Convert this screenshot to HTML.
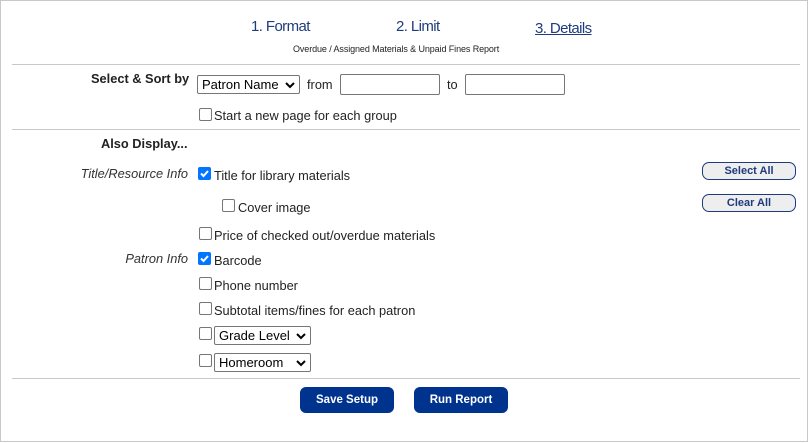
<!DOCTYPE html>
<html><head><style>
body{margin:0;width:810px;height:443px;position:relative;font-family:"Liberation Sans",Arial,sans-serif;font-size:12.8px;color:#222;background:#fff;overflow:hidden}
.frame{position:absolute;left:0;top:0;width:806px;height:440px;border:1px solid #c8c8c8}
.a{position:absolute;white-space:nowrap}
.hr{position:absolute;left:12px;width:788px;height:1px;background:#c8c8c8}
.step{font-size:15px;color:#1f3b7f;letter-spacing:-0.6px}
.cb{position:absolute;width:11px;height:11px;border:1px solid #767676;border-radius:2px;background:#fff}
.cbc{position:absolute;width:13px;height:13px;border-radius:2px;background:#0075ff}
.sel{position:absolute;height:19px;border:1px solid #767676;border-radius:2px;background:#fff;font-size:13px;box-sizing:border-box;padding:1px 4px;color:#000}
.inp{position:absolute;height:21px;border:1px solid #767676;border-radius:2px;box-sizing:border-box;background:#fff}
.chev{position:absolute;right:4px;top:5px}
.lab{position:absolute;font-style:italic;text-align:right;right:622px;color:#333}
.btn{position:absolute;background:#00338d;color:#fff;font-weight:bold;font-size:11.5px;border-radius:6px;text-align:center;line-height:26px;height:26px}
.sb{position:absolute;width:92px;height:16px;border:1px solid #1f3b7f;border-radius:7px;background:#eeeeee;color:#1f3b7f;font-weight:bold;font-size:11px;text-align:center;line-height:16px}
</style></head><body>
<div class="frame"></div>
<div class="a step" style="left:251px;top:18px">1. Format</div>
<div class="a step" style="left:396px;top:18px">2. Limit</div>
<div class="a step" style="left:535px;top:20px;text-decoration:underline">3. Details</div>
<div class="a" style="left:293px;top:44px;font-size:9px;color:#222;letter-spacing:-0.1px">Overdue / Assigned Materials &amp; Unpaid Fines Report</div>
<div class="hr" style="top:64px"></div>
<div class="a" style="left:91px;top:71px;font-weight:bold">Select &amp; Sort by</div>
<div class="sel" style="left:197px;top:75px;width:103px">Patron Name<svg class="chev" width="10" height="8" viewBox="0 0 10 8"><path d="M1 2l4 4 4-4" stroke="#000" stroke-width="2" fill="none"/></svg></div>
<div class="a" style="left:307px;top:77px">from</div>
<div class="inp" style="left:340px;top:74px;width:100px"></div>
<div class="a" style="left:447px;top:77px">to</div>
<div class="inp" style="left:465px;top:74px;width:100px"></div>
<div class="cb" style="left:199px;top:108px"></div>
<div class="a" style="left:214px;top:108px">Start a new page for each group</div>
<div class="hr" style="top:129px"></div>
<div class="a" style="left:101px;top:136px;font-weight:bold">Also Display...</div>
<div class="lab" style="top:166px">Title/Resource Info</div>
<div class="cbc" style="left:198px;top:167px"><svg width="13" height="13"><path d="M3 6.5l2.5 2.5 4.5-5" stroke="#fff" stroke-width="2" fill="none"/></svg></div>
<div class="a" style="left:214px;top:168px">Title for library materials</div>
<div class="sb" style="left:702px;top:162px">Select All</div>
<div class="sb" style="left:702px;top:194px">Clear All</div>
<div class="cb" style="left:222px;top:199px"></div>
<div class="a" style="left:238px;top:200px">Cover image</div>
<div class="cb" style="left:199px;top:227px"></div>
<div class="a" style="left:214px;top:228px">Price of checked out/overdue materials</div>
<div class="lab" style="top:251px">Patron Info</div>
<div class="cbc" style="left:198px;top:252px"><svg width="13" height="13"><path d="M3 6.5l2.5 2.5 4.5-5" stroke="#fff" stroke-width="2" fill="none"/></svg></div>
<div class="a" style="left:214px;top:253px">Barcode</div>
<div class="cb" style="left:199px;top:277px"></div>
<div class="a" style="left:214px;top:278px">Phone number</div>
<div class="cb" style="left:199px;top:302px"></div>
<div class="a" style="left:214px;top:303px">Subtotal items/fines for each patron</div>
<div class="cb" style="left:199px;top:327px"></div>
<div class="sel" style="left:214px;top:326px;width:97px">Grade Level<svg class="chev" width="10" height="8" viewBox="0 0 10 8"><path d="M1 2l4 4 4-4" stroke="#000" stroke-width="2" fill="none"/></svg></div>
<div class="cb" style="left:199px;top:354px"></div>
<div class="sel" style="left:214px;top:353px;width:97px">Homeroom<svg class="chev" width="10" height="8" viewBox="0 0 10 8"><path d="M1 2l4 4 4-4" stroke="#000" stroke-width="2" fill="none"/></svg></div>
<div class="hr" style="top:378px"></div>
<div class="btn" style="left:300px;top:387px;width:94px">Save Setup</div>
<div class="btn" style="left:414px;top:387px;width:94px">Run Report</div>
</body></html>
